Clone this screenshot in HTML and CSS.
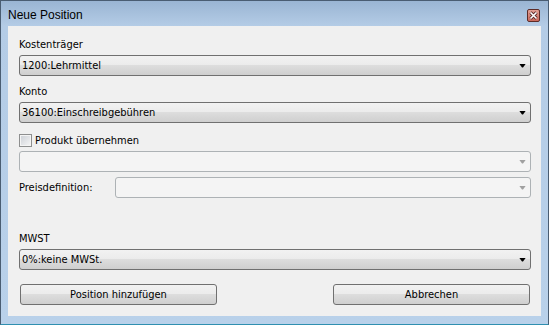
FILE: index.html
```html
<!DOCTYPE html>
<html lang="de">
  <head>
    <meta charset="UTF-8" />
    <title>Neue Position</title>
    <link rel="stylesheet" href="styles.css">
  </head>
  <body>
    <div class="window">
      <div class="titlebar">
        <span class="title">Neue Position</span>
        <span class="close">
          <svg width="13" height="13" viewBox="0 0 13 13">
            <path d="M3.5 3.5 L9.5 9.5 M9.5 3.5 L3.5 9.5" stroke="#5a2a2a" stroke-width="3.2" />
            <path d="M3.5 3.5 L9.5 9.5 M9.5 3.5 L3.5 9.5" stroke="#ffffff" stroke-width="1.6" />
          </svg>
        </span>
      </div>

      <div class="client">
        <label class="lbl first">Kostenträger</label>
        <div class="combo">
          <span>1200:Lehrmittel</span>
          <i class="arrow"></i>
        </div>

        <label class="lbl">Konto</label>
        <div class="combo">
          <span>36100:Einschreibgebühren</span>
          <i class="arrow"></i>
        </div>

        <label class="check">
          <span class="box"></span>
          Produkt übernehmen
        </label>
        <div class="combo disabled">
          <span></span>
          <i class="arrow"></i>
        </div>

        <div class="row">
          <span class="row-lbl">Preisdefinition:</span>
          <div class="combo disabled grow">
            <span></span>
            <i class="arrow"></i>
          </div>
        </div>

        <label class="lbl mwst">MWST</label>
        <div class="combo">
          <span>0%:keine MWSt.</span>
          <i class="arrow"></i>
        </div>

        <div class="buttons">
          <button>Position hinzufügen</button>
          <button>Abbrechen</button>
        </div>
      </div>
    </div>
  </body>
</html>
```

FILE: styles.css
```css
body {
  margin: 0;
  font-family: "DejaVu Sans Condensed", "DejaVu Sans", sans-serif;
  font-size: 11px;
  color: #000;
}
.window {
  width: 549px;
  height: 325px;
  box-sizing: border-box;
  border: 1px solid #4a5d72;
  border-bottom-color: #2f8fb0;
  padding: 0 7px 8px 7px;
  background: linear-gradient(#9ab5d3, #b4cce6 25px, #b9d1ea);
}
.titlebar {
  height: 25px;
  display: flex;
  align-items: flex-start;
  justify-content: space-between;
}
.title {
  font-family: "Liberation Sans", sans-serif;
  font-size: 12px;
  line-height: 14px;
  margin-top: 7px;
  color: #000;
}
.close {
  width: 13px;
  height: 13px;
  margin-right: 1px;
  margin-top: 8px;
  box-sizing: border-box;
  border: 1px solid #5d2c28;
  border-radius: 2px;
  background: linear-gradient(#e3a196, #c9685b);
  display: flex;
}
.close svg {
  margin: -1px;
}
.client {
  height: 290px;
  box-sizing: border-box;
  background: #f0f0f0;
  padding: 0 10px 0 11px;
  display: flex;
  flex-direction: column;
}
.lbl {
  height: 13px;
  line-height: 13px;
  margin: 9px 0 4px 0;
}
.lbl.first {
  margin-top: 12px;
}
.lbl.mwst {
  margin-top: 34px;
}
.combo {
  height: 21px;
  box-sizing: border-box;
  border: 1px solid #707070;
  border-radius: 3px;
  background: linear-gradient(#f2f2f2, #ebebeb 50%, #dddddd 50%, #cfcfcf);
  display: flex;
  align-items: center;
  justify-content: space-between;
  padding: 0 3px 0 2px;
}
.combo span {
  line-height: 13px;
}
.arrow {
  width: 7px;
  height: 4px;
  background: #000;
  clip-path: polygon(0 0, 7px 0, 4px 4px, 3px 4px);
  margin-right: 1px;
}
.combo.disabled {
  border-color: #adb2b5;
  background: #f4f4f4;
}
.combo.disabled .arrow {
  background: #a0a0a0;
}
.check {
  display: flex;
  align-items: center;
  gap: 3px;
  height: 13px;
  margin: 11px 0 4px 0;
}
.box {
  width: 13px;
  height: 13px;
  box-sizing: border-box;
  border: 1px solid #8e8f8f;
  background: linear-gradient(135deg, #cbcfd5, #f6f6f6);
  box-shadow: inset 0 0 0 1px #f4f4f4;
}
.row {
  display: flex;
  align-items: center;
  margin-top: 5px;
}
.row-lbl {
  width: 96px;
}
.grow {
  flex: 1;
}
.buttons {
  display: flex;
  justify-content: space-between;
  margin-top: 14px;
  padding: 0 1px 0 1px;
}
button {
  width: 197px;
  height: 21px;
  font-family: inherit;
  font-size: 11px;
  border: 1px solid #707070;
  border-radius: 3px;
  background: linear-gradient(#f2f2f2, #ebebeb 50%, #dddddd 50%, #cfcfcf);
  padding: 0;
  color: #000;
}
```
